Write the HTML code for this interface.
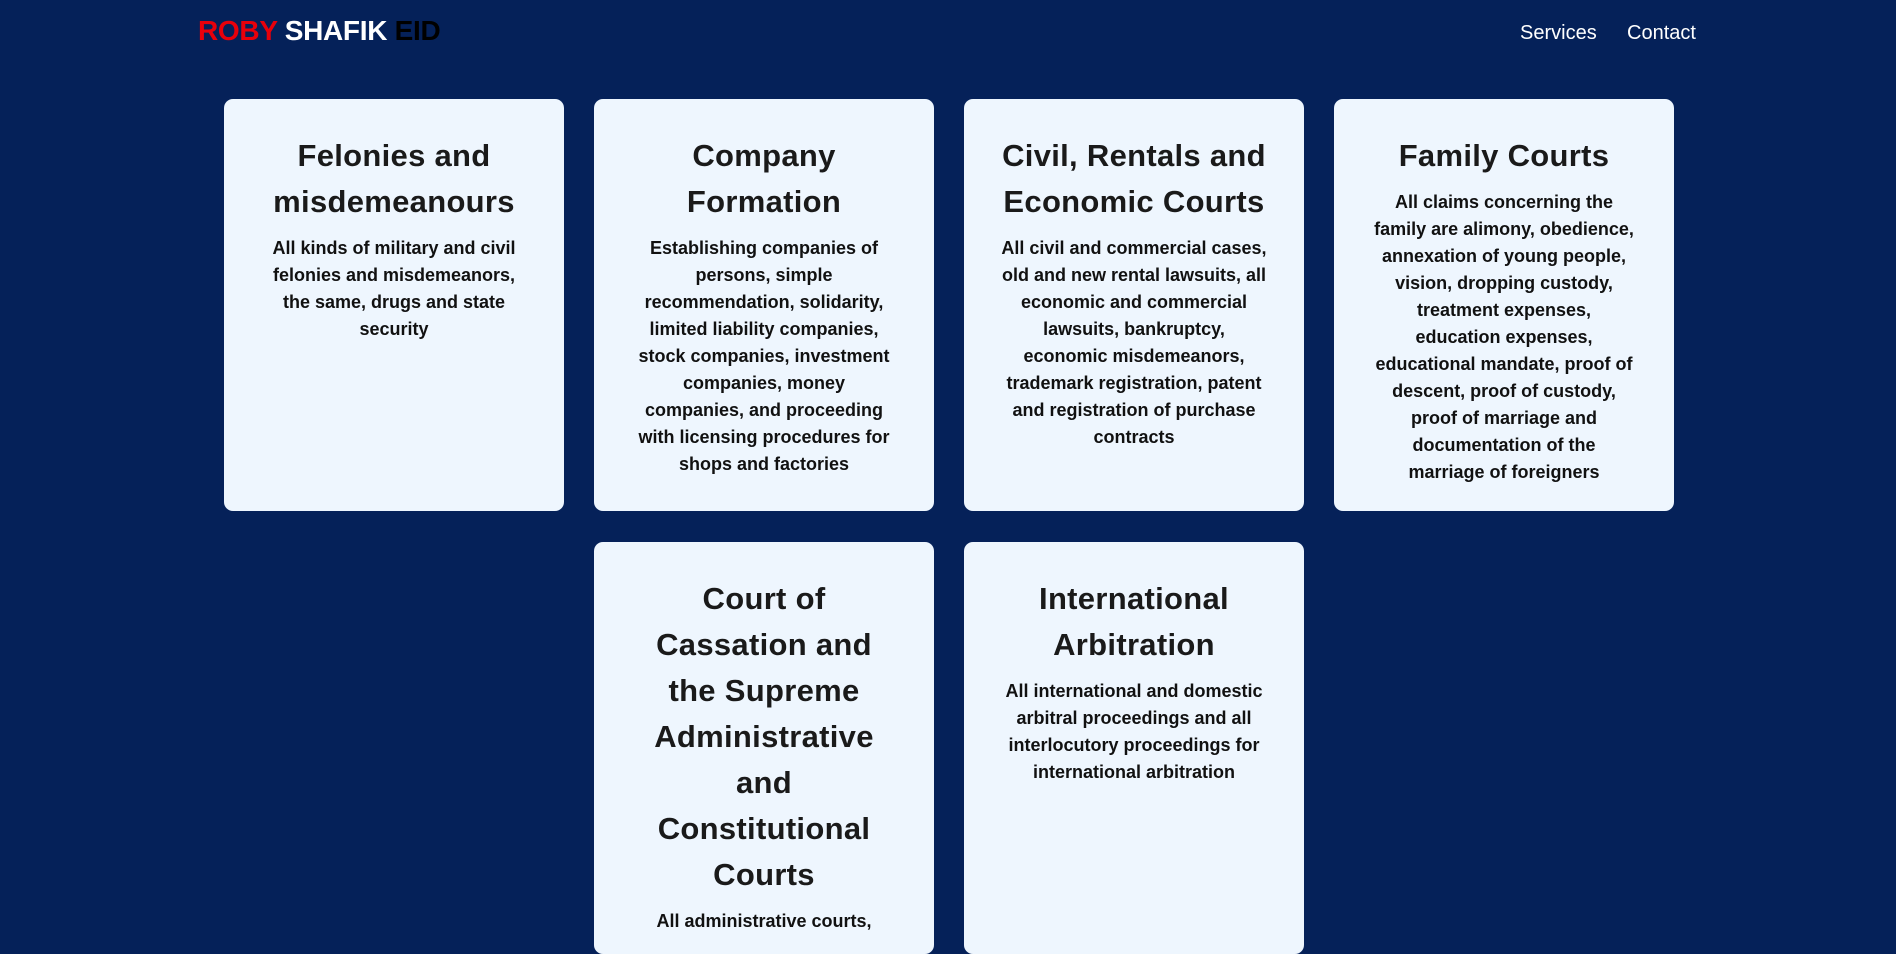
<!DOCTYPE html>
<html><head><meta charset="utf-8"><style>
*{margin:0;padding:0;box-sizing:border-box}
html,body{width:1896px;height:929px;overflow:hidden;background:#052159;font-family:"Liberation Sans",Arial,sans-serif}
.logo{position:absolute;left:198px;top:15px;font-size:28px;font-weight:bold;letter-spacing:-0.3px;white-space:nowrap}
.nav{position:absolute;top:22px;font-size:20px;color:#fff;white-space:nowrap}
.card{position:absolute;width:340px;height:412px;background:#eef6fe;border-radius:9px;text-align:center;padding-top:34px;color:#1a1a1a;white-space:nowrap}
.card h2{font-size:31px;line-height:46px;font-weight:bold;letter-spacing:0.3px}
.card p{font-size:18px;line-height:27px;font-weight:bold;margin-top:10px;color:#111}
</style></head><body>
<div class="logo"><span style="color:#e8000b">ROBY</span> <span style="color:#fff">SHAFIK</span> <span style="color:#000">EID</span></div>
<div class="nav" style="left:1520px">Services</div>
<div class="nav" style="left:1627px">Contact</div>

<div class="card" style="left:224px;top:99px"><h2>Felonies and<br>misdemeanours</h2><p>All kinds of military and civil<br>felonies and misdemeanors,<br>the same, drugs and state<br>security</p></div>
<div class="card" style="left:594px;top:99px"><h2>Company<br>Formation</h2><p>Establishing companies of<br>persons, simple<br>recommendation, solidarity,<br>limited liability companies,<br>stock companies, investment<br>companies, money<br>companies, and proceeding<br>with licensing procedures for<br>shops and factories</p></div>
<div class="card" style="left:964px;top:99px"><h2>Civil, Rentals and<br>Economic Courts</h2><p>All civil and commercial cases,<br>old and new rental lawsuits, all<br>economic and commercial<br>lawsuits, bankruptcy,<br>economic misdemeanors,<br>trademark registration, patent<br>and registration of purchase<br>contracts</p></div>
<div class="card" style="left:1334px;top:99px"><h2>Family Courts</h2><p>All claims concerning the<br>family are alimony, obedience,<br>annexation of young people,<br>vision, dropping custody,<br>treatment expenses,<br>education expenses,<br>educational mandate, proof of<br>descent, proof of custody,<br>proof of marriage and<br>documentation of the<br>marriage of foreigners</p></div>
<div class="card" style="left:594px;top:542px"><h2>Court of<br>Cassation and<br>the Supreme<br>Administrative<br>and<br>Constitutional<br>Courts</h2><p>All administrative courts,</p></div>
<div class="card" style="left:964px;top:542px"><h2>International<br>Arbitration</h2><p>All international and domestic<br>arbitral proceedings and all<br>interlocutory proceedings for<br>international arbitration</p></div>
</body></html>
